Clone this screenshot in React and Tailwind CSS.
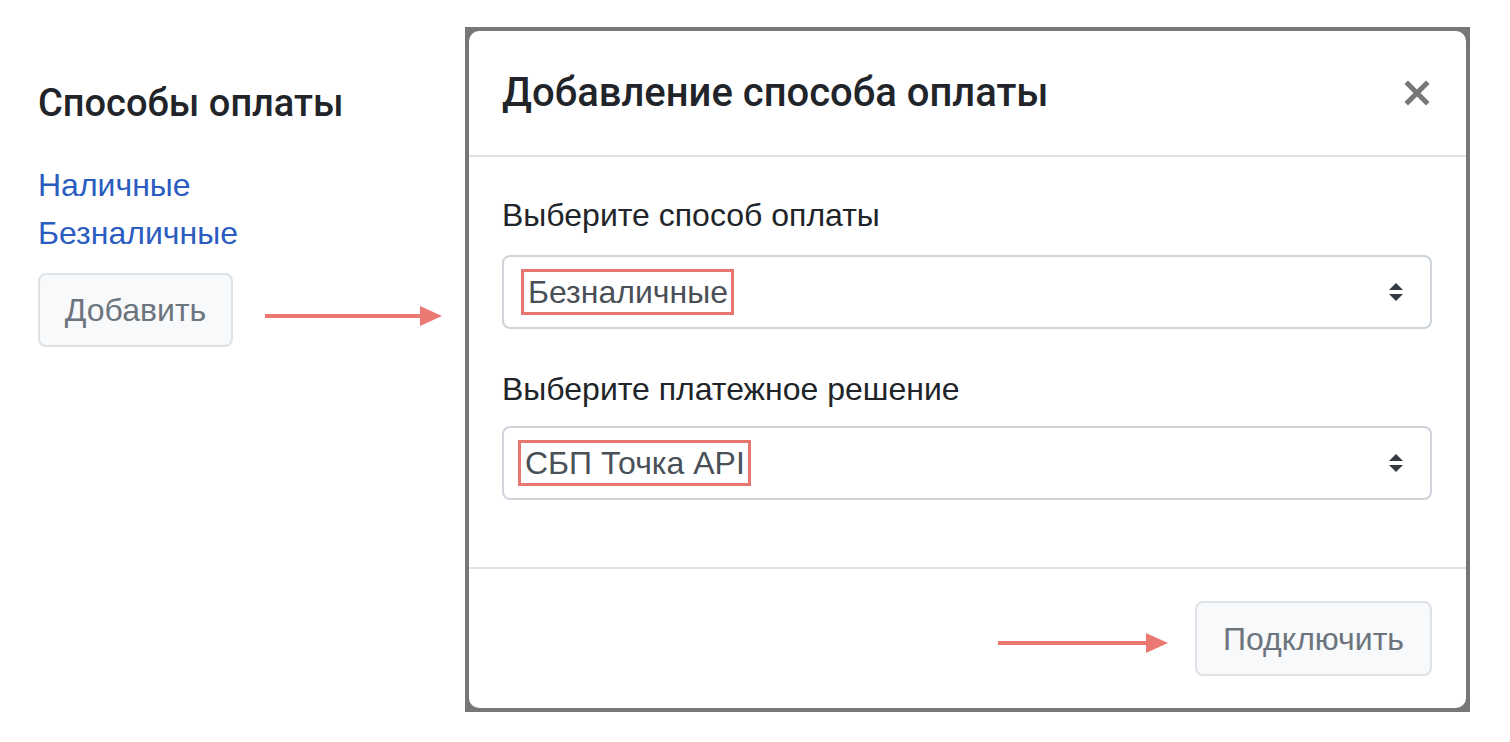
import React from 'react'

function Arrow({ width }) {
  return (
    <svg width={width} height="22" viewBox={`0 0 ${width} 22`} className="block">
      <rect x="0" y="9" width={width - 20} height="4" fill="#ec7872" />
      <polygon points={`${width - 22},1 ${width},11 ${width - 22},21`} fill="#ec7872" />
    </svg>
  )
}

function SelectArrows() {
  return (
    <svg width="16" height="22" viewBox="0 0 16 22" className="block">
      <polygon points="8,2 15,9 1,9" fill="#343a40" />
      <polygon points="1,13 15,13 8,20" fill="#343a40" />
    </svg>
  )
}

function FakeSelect({ value, inset }) {
  return (
    <div className={`w-[930px] h-[74px] rounded-[8px] border-2 border-[#ced4da] bg-white flex items-center justify-between pr-[26px] ${inset}`}>
      <span className="border-[3px] border-[#e87670] pl-[4px] pr-[3px] h-[46px] flex items-center text-[32px] text-[#495057]">
        {value}
      </span>
      <SelectArrows />
    </div>
  )
}

export default function App() {
  return (
    <div className="w-[1510px] h-[742px] bg-white flex font-['Liberation_Sans','Noto_Sans',sans-serif] text-[#212529]">
      <div className="w-[465px] pl-[38px] pt-[79px] shrink-0">
        <h2 className="font-['Roboto',sans-serif] text-[38px] font-medium leading-[48px]">Способы оплаты</h2>
        <div className="mt-[34px] flex flex-col text-[32px] leading-[48px] text-[#2b5cbf]">
          <a href="#">Наличные</a>
          <a href="#">Безналичные</a>
        </div>
        <div className="mt-[16px] flex items-center">
          <button className="w-[195px] h-[74px] rounded-[8px] border-2 border-[#dee2e6] bg-[#f8f9fa] text-[32px] text-[#6c757d]">
            Добавить
          </button>
          <div className="ml-[32px] mt-[12px]">
            <Arrow width={177} />
          </div>
        </div>
      </div>

      <div className="mt-[27px] w-[1005px] h-[685px] bg-[#777] p-[4px] shrink-0">
        <div className="w-full h-full bg-white rounded-[10px] flex flex-col">
          <div className="h-[126px] shrink-0 flex items-center justify-between pl-[33px] pr-[36px] border-b-2 border-[#dee2e6]">
            <h3 className="font-['Roboto',sans-serif] text-[40px] font-medium">Добавление способа оплаты</h3>
            <svg width="26" height="26" viewBox="0 0 26 26" className="block">
              <path d="M4 4 L22 22 M22 4 L4 22" stroke="#777" strokeWidth="5" strokeLinecap="square" />
            </svg>
          </div>
          <div className="flex-1 px-[33px] pt-[34px]">
            <div className="text-[32px] leading-[48px]">Выберите способ оплаты</div>
            <div className="mt-[16px]">
              <FakeSelect value="Безналичные" inset="pl-[17px]" />
            </div>
            <div className="mt-[36px] text-[32px] leading-[48px]">Выберите платежное решение</div>
            <div className="mt-[13px]">
              <FakeSelect value="СБП Точка API" inset="pl-[14px]" />
            </div>
          </div>
          <div className="h-[141px] shrink-0 border-t-2 border-[#dee2e6] flex items-center justify-end pr-[34px]">
            <div className="mr-[27px] mt-[8px]">
              <Arrow width={170} />
            </div>
            <button className="w-[237px] h-[75px] rounded-[8px] border-2 border-[#dee2e6] bg-[#f8f9fa] text-[32px] text-[#6c757d]">
              Подключить
            </button>
          </div>
        </div>
      </div>
    </div>
  )
}
